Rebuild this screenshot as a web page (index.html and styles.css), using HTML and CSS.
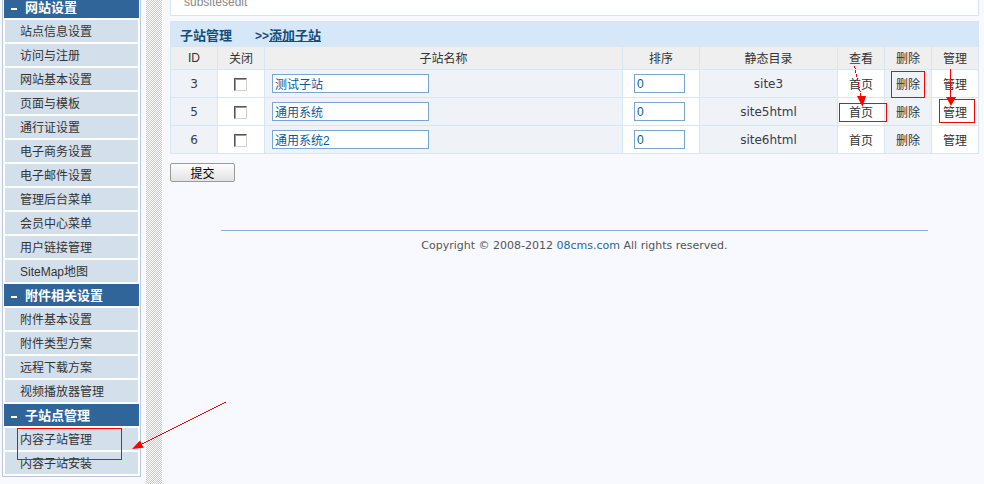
FILE: index.html
```html
<!DOCTYPE html>
<html lang="zh-CN">
<head>
  <meta charset="UTF-8" />
  <title>子站管理</title>
  <link rel="stylesheet" href="styles.css">
</head>
<body>
  <div class="page">
    <div class="side">
      <div class="side-hd first"><span class="dash"></span>网站设置</div>
      <a class="side-item">站点信息设置</a>
      <a class="side-item">访问与注册</a>
      <a class="side-item">网站基本设置</a>
      <a class="side-item">页面与模板</a>
      <a class="side-item">通行证设置</a>
      <a class="side-item">电子商务设置</a>
      <a class="side-item">电子邮件设置</a>
      <a class="side-item">管理后台菜单</a>
      <a class="side-item">会员中心菜单</a>
      <a class="side-item">用户链接管理</a>
      <a class="side-item">SiteMap地图</a>

      <div class="side-hd"><span class="dash"></span>附件相关设置</div>
      <a class="side-item">附件基本设置</a>
      <a class="side-item">附件类型方案</a>
      <a class="side-item">远程下载方案</a>
      <a class="side-item">视频播放器管理</a>

      <div class="side-hd"><span class="dash"></span>子站点管理</div>
      <a class="side-item">内容子站管理</a>
      <a class="side-item">内容子站安装</a>
    </div>

    <div class="stripe"></div>

    <div class="main">
      <div class="topbox">subsitesedit</div>

      <table class="grid">
        <colgroup>
          <col style="width:47px"><col style="width:47px"><col style="width:358px"><col style="width:77px">
          <col style="width:138px"><col style="width:47px"><col style="width:47px"><col style="width:47px">
        </colgroup>
        <tr class="title">
          <td colspan="8">子站管理<span class="add">&gt;&gt;<a>添加子站</a></span></td>
        </tr>
        <tr class="head">
          <td>ID</td><td>关闭</td><td>子站名称</td><td>排序</td><td>静态目录</td><td>查看</td><td>删除</td><td>管理</td>
        </tr>
        <tr class="row">
          <td class="alt num">3</td>
          <td><input type="checkbox" class="chk"></td>
          <td class="alt name"><input type="text" class="txt wide" value="测试子站"></td>
          <td class="order"><input type="text" class="txt short" value="0"></td>
          <td class="alt num">site3</td>
          <td>首页</td>
          <td class="alt">删除</td>
          <td>管理</td>
        </tr>
        <tr class="row">
          <td class="alt num">5</td>
          <td><input type="checkbox" class="chk"></td>
          <td class="alt name"><input type="text" class="txt wide" value="通用系统"></td>
          <td class="order"><input type="text" class="txt short" value="0"></td>
          <td class="alt num">site5html</td>
          <td>首页</td>
          <td class="alt">删除</td>
          <td>管理</td>
        </tr>
        <tr class="row">
          <td class="alt num">6</td>
          <td><input type="checkbox" class="chk"></td>
          <td class="alt name"><input type="text" class="txt wide" value="通用系统2"></td>
          <td class="order"><input type="text" class="txt short" value="0"></td>
          <td class="alt num">site6html</td>
          <td>首页</td>
          <td class="alt">删除</td>
          <td>管理</td>
        </tr>
      </table>

      <div class="actions"><button class="btn">提交</button></div>

      <div class="footer">
        <p>Copyright © 2008-2012 <a>08cms.com</a> All rights reserved.</p>
      </div>
    </div>
  </div>

  <!-- red hand-drawn notes over the page -->
  <svg class="marks" width="984" height="484" viewBox="0 0 984 484" shape-rendering="crispEdges">
    <g fill="none" stroke="#f00" stroke-width="1">
      <rect x="17.5" y="428.5" width="104" height="31"/>
      <rect x="891.5" y="71.5" width="33" height="26"/>
      <rect x="839.5" y="103.5" width="47" height="18"/>
      <rect x="939.5" y="99.5" width="35" height="23"/>
      <line x1="854.5" y1="66" x2="861.5" y2="98" stroke-dasharray="3 1"/>
      <line x1="950.5" y1="69" x2="950.5" y2="98"/>
      <line x1="226" y1="402" x2="140" y2="445"/>
    </g>
    <g fill="#f00" shape-rendering="auto">
      <polygon points="857,96 866,96 862.5,107"/>
      <polygon points="946,97 956,97 951,106"/>
      <polygon points="132,449 143.6,447.7 140,440.5"/>
    </g>
  </svg>
</body>
</html>
```

FILE: styles.css
```css
body {
  margin: 0;
  background: #f8f8ff;
  font: 12px "Liberation Sans", "Noto Sans CJK SC", sans-serif;
  color: #333;
}

.page {
  display: flex;
  margin-top: -6px;
  min-height: 496px;
}

/* left menu */
.side {
  width: 138px;
  margin-left: 2px;
  padding: 2px 0 2px;
  background: #fff;
  border: 1px solid #b7c9de;
  border-top: 0;
  align-self: flex-start;
}

.side-hd {
  height: 22px;
  line-height: 24px;
  margin: 2px 1px 0;
  padding-left: 7px;
  background: #30659a;
  color: #fff;
  font-weight: bold;
  font-size: 13px;
  overflow: hidden;
}

.side-hd.first {
  margin-top: 0;
}

.dash {
  display: inline-block;
  width: 6px;
  height: 2px;
  margin-right: 8px;
  background: #fff;
  vertical-align: middle;
}

.side-item {
  display: block;
  height: 22px;
  line-height: 24px;
  margin: 2px 2px 0;
  padding-left: 15px;
  background: #d3dfea;
  color: #333;
  overflow: hidden;
}

.stripe {
  width: 16px;
  margin-left: 5px;
  background: repeating-conic-gradient(#c9c9c9 0 25%, #fff 0 50%) 0 0 / 2px 2px;
}

/* content */
.main {
  flex: 1;
  padding: 0 5px 0 8px;
}

.topbox {
  height: 20px;
  line-height: 14px;
  padding-left: 13px;
  background: #fff;
  border: 1px solid #d6e6f5;
  color: #888;
}

.grid {
  width: 100%;
  margin-top: 5px;
  border-collapse: collapse;
  table-layout: fixed;
  background: #fff;
}

.grid td {
  padding: 0;
  border: 1px solid #d6e6f4;
  text-align: center;
}

.title td {
  height: 24px;
  padding-left: 9px;
  text-align: left;
  background: #d6e7f7;
  color: #134d7c;
  font-weight: bold;
  font-size: 13px;
}

.add {
  margin-left: 23px;
  font-size: 12px;
}

.add a {
  font-size: 13px;
  text-decoration: underline;
}

.head td {
  height: 21px;
  padding-bottom: 1px;
  background: #efefef;
}

.row td {
  height: 27px;
}

.row td.alt {
  background: #eff3f8;
}

.num {
  font-family: "DejaVu Sans", sans-serif;
  color: #3a3a4a;
}

.row td.name {
  text-align: left;
  padding-left: 7px;
}

.row td.order {
  text-align: left;
  padding-left: 11px;
}

.txt {
  box-sizing: border-box;
  height: 19px;
  margin: 0;
  padding: 0 2px;
  border: 1px solid #7aa4d3;
  background: #fff;
  color: #0b5a98;
  font: 12px "Liberation Sans", "Noto Sans CJK SC", sans-serif;
  vertical-align: middle;
}

.wide {
  width: 157px;
}

.short {
  width: 51px;
}

.chk {
  appearance: none;
  width: 13px;
  height: 13px;
  margin: 0;
  background: #fff;
  border: 1px solid;
  border-color: #555 #d4d0c8 #d4d0c8 #555;
  box-shadow: inset 1px 1px 0 #999;
  vertical-align: middle;
}

.actions {
  margin-top: 9px;
}

.btn {
  width: 65px;
  height: 19px;
  padding: 0;
  background: linear-gradient(#fdfdfd, #e2e2e2);
  border: 1px solid #9a9a9a;
  border-radius: 2px;
  color: #000;
  font: 12px "Noto Sans CJK SC", sans-serif;
}

.footer {
  width: 707px;
  margin: 48px auto 0;
  border-top: 1px solid #8cb0d3;
  text-align: center;
}

.footer p {
  margin: 8px 0 0;
  font: 11px "DejaVu Sans", sans-serif;
  color: #555;
}

.footer a {
  color: #1a6a9c;
}

.marks {
  position: absolute;
  top: 0;
  left: 0;
  pointer-events: none;
}
```
